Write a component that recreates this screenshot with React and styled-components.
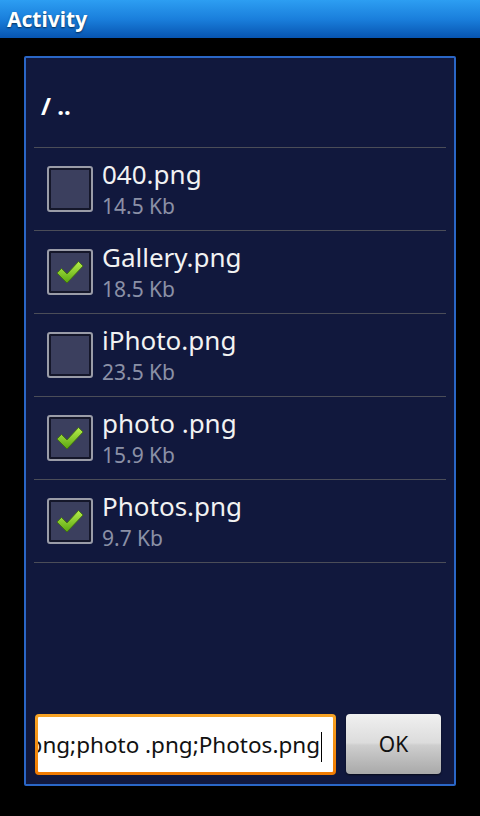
import React from "react";
import styled, { createGlobalStyle } from "styled-components";

const GlobalStyle = createGlobalStyle`
  html, body {
    margin: 0;
    padding: 0;
    background: #000;
  }
  body {
    font-family: "Noto Sans", "Open Sans", sans-serif;
  }
`;

const Screen = styled.div`
  width: 480px;
  height: 816px;
  display: flex;
  flex-direction: column;
  background: #000;
  overflow: hidden;
`;

const TitleBar = styled.div`
  height: 38px;
  flex-shrink: 0;
  display: flex;
  align-items: center;
  padding: 0 7px;
  background: linear-gradient(to bottom, #2d9ef2 0%, #1a7fdc 50%, #0754b0 100%);
  color: #fff;
  font-size: 21px;
  font-weight: bold;
  text-shadow: 0 1px 2px rgba(0, 0, 0, 0.6);
  box-sizing: border-box;
`;

const Panel = styled.div`
  flex: 1;
  margin: 18px 24px 30px 24px;
  border: 2px solid #2a66c6;
  border-radius: 2px;
  background: #11183d;
  display: flex;
  flex-direction: column;
  min-height: 0;
`;

const PathHeader = styled.div`
  height: 90px;
  display: flex;
  align-items: center;
  color: #fff;
  font-size: 24px;
  font-weight: bold;
  border-bottom: 1px solid #4b4d58;
  margin: 0 8px;
  padding: 6px 0 0 7px;
  box-sizing: border-box;
`;

const FileList = styled.div`
  margin: 0 8px;
  display: flex;
  flex-direction: column;
`;

const Row = styled.div`
  height: 83px;
  box-sizing: border-box;
  border-bottom: 1px solid #4b4d58;
  display: flex;
  align-items: center;
  padding-left: 13px;
  padding-bottom: 1px;
`;

const Box = styled.div`
  width: 46px;
  height: 46px;
  box-sizing: border-box;
  border: 2px solid #9a9ca8;
  border-radius: 3px;
  background: #3b3f5e;
  box-shadow: inset 0 0 0 2px #15172a;
  display: flex;
  align-items: center;
  justify-content: center;
  flex-shrink: 0;
`;

const Info = styled.div`
  margin-left: 9px;
  display: flex;
  flex-direction: column;
  margin-top: -2px;
`;

const Name = styled.div`
  color: #f2f2f2;
  font-size: 26px;
  line-height: 36px;
`;

const Size = styled.div`
  color: #8b90a6;
  font-size: 21px;
  line-height: 28px;
`;

const Spacer = styled.div`
  flex: 1;
`;

const Footer = styled.div`
  display: flex;
  gap: 10px;
  padding: 0 13px 9px 9px;
  height: 61px;
`;

const Field = styled.div`
  flex: 1;
  min-width: 0;
  border-radius: 4px;
  padding: 3px;
  background: linear-gradient(to bottom, #f8a426 0%, #f07a00 100%);
  display: flex;
`;

const FieldInner = styled.div`
  flex: 1;
  min-width: 0;
  background: #fff;
  border-radius: 1px;
  overflow: hidden;
  display: flex;
  align-items: center;
  justify-content: flex-end;
  padding-right: 11px;
  white-space: nowrap;
  color: #111;
  font-size: 22.5px;
`;

const FieldText = styled.span`
  flex-shrink: 0;
`;

const Caret = styled.span`
  display: inline-block;
  flex-shrink: 0;
  width: 1px;
  height: 30px;
  background: #000;
  margin-left: 1px;
  margin-top: 4px;
`;

const OkButton = styled.div`
  width: 95px;
  flex-shrink: 0;
  border-radius: 4px;
  background: linear-gradient(
    to bottom,
    #f0f0f0 0%,
    #dcdcdc 48%,
    #cecece 52%,
    #a9a9a9 100%
  );
  box-shadow: 0 1px 2px rgba(0, 0, 0, 0.6);
  display: flex;
  align-items: center;
  justify-content: center;
  color: #111;
  font-size: 21px;
  height: 60px;
`;

const Check = () => (
  <svg width="30" height="26" viewBox="0 0 30 26">
    <defs>
      <linearGradient id="chk" x1="0" y1="0" x2="0" y2="1">
        <stop offset="0" stopColor="#b6ee4c" />
        <stop offset="1" stopColor="#5aa610" />
      </linearGradient>
    </defs>
    <path
      d="M2 14 L6.5 9.5 L12 15 L23.5 2.5 L28 7 L12 24 Z"
      fill="url(#chk)"
      stroke="#3d6e0a"
      strokeWidth="0.8"
      strokeLinejoin="round"
    />
  </svg>
);

const files = [
  { name: "040.png", size: "14.5 Kb", checked: false },
  { name: "Gallery.png", size: "18.5 Kb", checked: true },
  { name: "iPhoto.png", size: "23.5 Kb", checked: false },
  { name: "photo .png", size: "15.9 Kb", checked: true },
  { name: "Photos.png", size: "9.7 Kb", checked: true },
];

export default function App() {
  const value = files
    .filter((f) => f.checked)
    .map((f) => f.name)
    .join(";");

  return (
    <>
      <GlobalStyle />
      <Screen>
        <TitleBar>Activity</TitleBar>
        <Panel>
          <PathHeader>/ ..</PathHeader>
          <FileList>
            {files.map((f) => (
              <Row key={f.name}>
                <Box>{f.checked && <Check />}</Box>
                <Info>
                  <Name>{f.name}</Name>
                  <Size>{f.size}</Size>
                </Info>
              </Row>
            ))}
          </FileList>
          <Spacer />
          <Footer>
            <Field>
              <FieldInner>
                <FieldText>{value}</FieldText>
                <Caret />
              </FieldInner>
            </Field>
            <OkButton>OK</OkButton>
          </Footer>
        </Panel>
      </Screen>
    </>
  );
}
